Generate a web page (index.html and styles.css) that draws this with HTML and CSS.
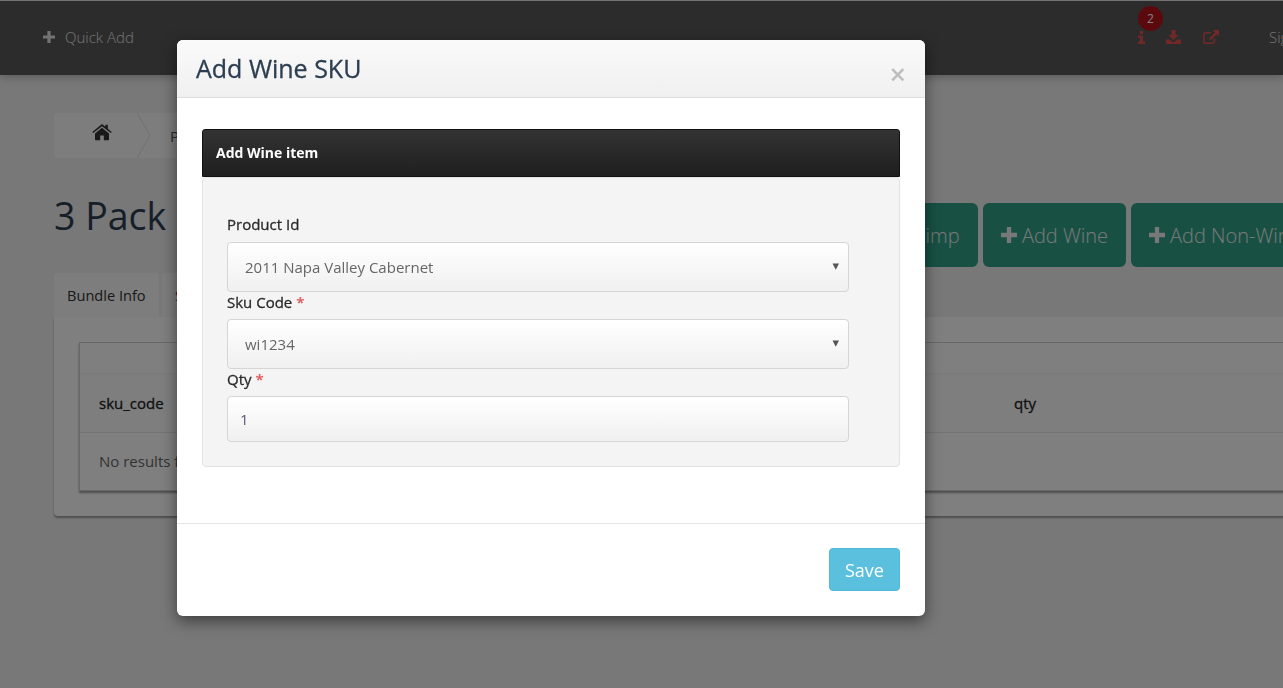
FILE: index.html
```html
<!DOCTYPE html>
<html lang="en">
<head>
<meta charset="utf-8">
<title>Add Wine SKU</title>
<link rel="stylesheet" href="styles.css">
</head>
<body>
<div class="page">
  <header class="nav">
    <a class="quick">
      <svg class="ic-plus" viewBox="0 0 12 12"><path d="M4.400 0h3.200v4.400H12v3.200H7.600V12H4.400V7.600H0V4.400h4.400z"/></svg>
      <span>Quick Add</span>
    </a>
    <div class="nav-right">
      <span class="nav-ic info">
        <span class="badge">2</span>
        <svg class="ic-info" viewBox="0 0 7 13"><path d="M1.800 0h3.400v3H1.800zM0 4.500h5v6.300h2V13H0v-2.200h1.800V6.700H0z"/></svg>
      </span>
      <svg class="ic-down" viewBox="0 0 15 14"><path d="M5.500 0h4v5h3l-5 5-5-5h3zM0 9.500h3.900l2.200 2.100c.8.700 2 .7 2.800 0l2.200-2.100H15V14H0z"/></svg>
      <svg class="ic-ext" viewBox="0 0 16 14"><path d="M9.500 0H16v6.500l-2.300-2.300-6 6-1.600-1.600 6-6zM2.800 2H8v1.600H2.800c-.7 0-1.200.5-1.200 1.200v6.400c0 .7.500 1.200 1.200 1.200h6.400c.7 0 1.200-.5 1.200-1.200V8.500H12v2.700c0 1.600-1.200 2.800-2.800 2.800H2.800C1.200 14 0 12.800 0 11.200V4.800C0 3.200 1.200 2 2.800 2z"/></svg>
      <span class="signout">Sign out</span>
    </div>
  </header>
  <main class="main">
    <nav class="crumbs">
      <span class="crumb-home">
        <svg class="ic-home" viewBox="0 0 20 17"><path d="M10 3.800l7 5.700V15.500c0 .4-.3.7-.7.700h-4.500v-4.600H8.200v4.600H3.700c-.4 0-.7-.3-.7-.7V9.500zM10 0l3.400 2.800V.8h2.400v4l3.900 3.200-.9 1.100L10 2.300 1.200 9.100.3 8z"/></svg>
      </span>
      <svg class="crumb-sep" viewBox="0 0 14 45"><polyline points="0,0 13,22.500 0,45"/></svg>
      <span class="crumb-text">Products</span>
    </nav>
    <div class="title-row">
      <h1 class="title">3 Pack</h1>
      <div class="actions">
        <button class="btn-teal btn-chimp">Mailchimp</button>
        <button class="btn-teal btn-wine"><svg class="ic-btn" viewBox="0 0 12 12"><path d="M4.400 0h3.200v4.400H12v3.200H7.600V12H4.400V7.600H0V4.400h4.400z"/></svg> Add Wine</button>
        <button class="btn-teal btn-nonwine"><svg class="ic-btn" viewBox="0 0 12 12"><path d="M4.400 0h3.200v4.400H12v3.200H7.600V12H4.400V7.600H0V4.400h4.400z"/></svg> Add Non-Wine</button>
      </div>
    </div>
    <div class="tabs">
      <span class="tab">Bundle Info</span>
      <span class="tab tab-red">Skus</span>
    </div>
    <section class="card">
      <div class="table">
        <div class="t-top"></div>
        <div class="t-head"><b class="th-sku">sku_code</b><b class="th-qty">qty</b></div>
        <div class="t-body">No results found</div>
      </div>
    </section>
  </main>
</div>
<div class="overlay"></div>
<div class="modal">
  <div class="m-head">
    <h2 class="m-title">Add Wine SKU</h2>
    <span class="m-close">×</span>
  </div>
  <div class="m-body">
    <div class="p-head">Add Wine item</div>
    <form class="p-body">
      <label class="lab lab-first">Product Id</label>
      <div class="field sel"><span>2011 Napa Valley Cabernet</span></div>
      <label class="lab">Sku Code <i class="req">*</i></label>
      <div class="field sel"><span>wi1234</span></div>
      <label class="lab">Qty <i class="req">*</i></label>
      <div class="field inp"><span>1</span></div>
    </form>
  </div>
  <div class="m-foot"><button class="save">Save</button></div>
</div>
</body>
</html>
```
FILE: styles.css
```css
* { box-sizing: border-box; }
html, body { margin: 0; height: 688px; overflow: hidden; }
body { font-family: "Open Sans", "Liberation Sans", sans-serif; background: #f0f0f0; color: #333; font-size: 15px; }
.page { width: 1283px; height: 688px; overflow: hidden; }

.nav { height: 75px; background: #585858; border-top: 1px solid #e8e8e8; display: flex; align-items: center; justify-content: space-between; padding: 0 0 2px 43px; box-shadow: 0 2px 8px rgba(0,0,0,.25); white-space: nowrap; }
.quick { display: flex; align-items: center; gap: 10px; color: #e6e6e6; font-weight: 300; font-size: 15px; }
.ic-plus { width: 12px; height: 12px; fill: #e6e6e6; }
.nav-right { display: flex; align-items: center; width: 145px; flex: none; }
.nav-ic { position: relative; display: block; height: 13px; flex: none; }
.ic-info { display: block; width: 7px; height: 13px; fill: #e25050; }
.ic-down { width: 15px; height: 14px; flex: none; fill: #e25050; margin-left: 21px; }
.ic-ext { width: 16px; height: 14px; flex: none; fill: #e25050; margin-left: 22px; }
.badge { position: absolute; left: 0; top: -25px; width: 25px; height: 25px; border-radius: 50%; background: #b8121c; color: #fff; font-size: 12px; line-height: 25px; text-align: center; }
.signout { color: #e6e6e6; font-size: 15px; margin-left: 50px; font-weight: 300; flex: none; }

.main { padding: 38px 0 0 54px; width: 1400px; }
.crumbs { display: flex; align-items: center; height: 45px; width: 400px; background: #fafafa; border-radius: 4px; }
.crumb-home { width: 83px; display: flex; justify-content: center; padding-left: 13px; margin-top: -6px; }
.ic-home { width: 20px; height: 17px; fill: #333; }
.crumb-sep { width: 14px; height: 45px; flex: none; fill: none; stroke: #e0e0e0; stroke-width: 1; }
.crumb-text { margin-left: 19px; color: #555; }

.title-row { display: flex; align-items: flex-start; margin-top: 45px; height: 64px; }
.title { font-size: 37.500px; font-weight: 400; color: #2c3e50; margin: -6px 0 0; width: 800px; line-height: 38px; flex: none; }
.actions { display: flex; gap: 5px; flex: none; margin-left: 0; }
.btn-teal { height: 64px; border: 0; border-radius: 6px; background: #30a288; color: #f0f0f0; font: 300 20px "Open Sans", sans-serif; padding: 0; white-space: nowrap; display: flex; align-items: center; justify-content: center; gap: 5px; }
.btn-chimp { width: 124px; padding-right: 5px; }
.btn-wine { width: 143px; }
.btn-nonwine { width: 180px; justify-content: flex-start; padding-left: 18px; }
.ic-btn { width: 16px; height: 16px; fill: #f0f0f0; }

.tabs { display: flex; gap: 3px; margin-top: 6px; height: 44px; }
.tab { height: 44px; width: 105px; background: #fafafa; border-radius: 4px 4px 0 0; padding-left: 13px; line-height: 44px; color: #333; font-size: 14.600px; }
.tab-red { color: #b03030; }
.card { background: #ffffff; height: 199px; width: 1300px; padding: 25px; border-radius: 0 4px 4px 4px; box-shadow: 0 2px 2px rgba(0,0,0,.35); }
.table { border: 1px solid #d0d0d0; background: #fff; height: 149px; box-shadow: 0 2px 2px rgba(0,0,0,.4); }
.t-top { height: 31px; border-bottom: 1px solid #f2f2f2; }
.t-head { height: 59px; border-bottom: 1px solid #e8e8e8; display: flex; align-items: center; background: #fdfdfd; color: #222; }
.t-head b { font-weight: 400; -webkit-text-stroke: .3px #222; }
.th-sku { margin-left: 19px; width: 915px; }
.t-body { padding: 18px 19px; color: #666; }

.overlay { position: fixed; inset: 0; background: rgba(0,0,0,.5); }
.modal { position: absolute; left: 177px; top: 40px; width: 748px; height: 576px; background: #fff; border-radius: 6px; box-shadow: 0 5px 15px rgba(0,0,0,.5); display: flex; flex-direction: column; }
.m-head { height: 58px; flex: none; background: linear-gradient(#fafafa, #f0f0f0); border-bottom: 1px solid #ddd; border-radius: 6px 6px 0 0; display: flex; justify-content: space-between; padding: 0 19px; }
.m-title { margin: 0; font-size: 25px; font-weight: 500; line-height: 56px; color: #2c3e50; -webkit-text-stroke: .3px #2c3e50; }
.m-close { color: #bdbdbd; font-size: 29px; font-weight: 600; line-height: 68px; }
.m-body { flex: 1; padding: 31px 25px 0; }
.p-head { height: 48px; background: linear-gradient(#333, #1f1f1f); border: 1px solid #111; border-radius: 3px 3px 0 0; color: #fff; font-weight: 700; font-size: 14px; line-height: 46px; padding-left: 13px; }
.p-body { height: 290px; background: #f4f4f4; border: 1px solid #e3e3e3; border-radius: 4px; padding: 0 24px; display: flex; flex-direction: column; align-items: flex-start; }
.lab { display: block; font-weight: 400; -webkit-text-stroke: .3px #2b2b2b; color: #2b2b2b; font-size: 15px; line-height: 19px; height: 19px; margin-top: 1px; margin-bottom: 7px; }
.lab-first { margin-top: 37px; margin-bottom: 8px; }
.req { color: #e06060; font-style: normal; font-weight: 700; -webkit-text-stroke: 0; }
.field { width: 622px; border: 1px solid #d5d5d5; border-radius: 4px; background: linear-gradient(#fff, #f0f0f0); color: #666; display: flex; align-items: center; padding-left: 17px; position: relative; }
.sel { height: 50px; }
.sel::after { content: "▾"; position: absolute; right: 9px; top: 15px; font: 13px "DejaVu Sans", sans-serif; color: #555; }
.inp { height: 46px; padding-left: 12px; color: #5a5a7a; }
.m-foot { height: 93px; flex: none; border-top: 1px solid #e5e5e5; display: flex; justify-content: flex-end; padding: 24px 25px 0; }
.save { width: 71px; height: 43px; background: #5bc0de; border: 1px solid #50b8d8; border-radius: 4px; color: #fff; font: 400 18px "Open Sans", sans-serif; padding: 0; }
```
